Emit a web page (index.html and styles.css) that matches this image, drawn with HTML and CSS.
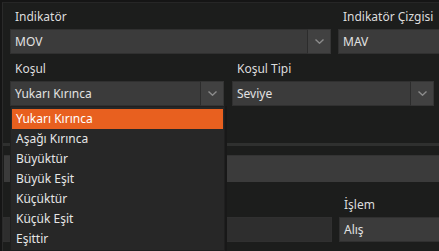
FILE: index.html
```html
<!DOCTYPE html>
<html lang="tr">
<head>
  <meta charset="UTF-8" />
  <meta name="viewport" content="width=device-width, initial-scale=1.0"/>
  <title>Koşul</title>
  <link rel="stylesheet" href="styles.css">
</head>
<body>
  <div class="frame">
    <div class="panel">
      <div class="row">
        <div class="field f-ind">
          <div class="label">Indikatör</div>
          <div class="select">
            <span class="value">MOV</span>
            <span class="btn"><svg width="9" height="5" viewBox="0 0 9 5"><path d="M0.5 0.5 L4.5 4.2 L8.5 0.5" fill="none" stroke="#8c8c8c" stroke-width="1.4"/></svg></span>
          </div>
        </div>
        <div class="field f-line">
          <div class="label">Indikatör Çizgisi</div>
          <div class="select"><span class="value">MAV</span></div>
        </div>
      </div>

      <div class="row">
        <div class="field f-cond">
          <div class="label">Koşul</div>
          <div class="select">
            <span class="value">Yukarı Kırınca</span>
            <span class="btn"><svg width="9" height="5" viewBox="0 0 9 5"><path d="M0.5 0.5 L4.5 4.2 L8.5 0.5" fill="none" stroke="#8c8c8c" stroke-width="1.4"/></svg></span>
          </div>
          <ul class="menu">
            <li class="active">Yukarı Kırınca</li>
            <li>Aşağı Kırınca</li>
            <li>Büyüktür</li>
            <li>Büyük Eşit</li>
            <li>Küçüktür</li>
            <li>Küçük Eşit</li>
            <li>Eşittir</li>
          </ul>
        </div>
        <div class="field f-type">
          <div class="label">Koşul Tipi</div>
          <div class="select">
            <span class="value">Seviye</span>
            <span class="btn"><svg width="9" height="5" viewBox="0 0 9 5"><path d="M0.5 0.5 L4.5 4.2 L8.5 0.5" fill="none" stroke="#8c8c8c" stroke-width="1.4"/></svg></span>
          </div>
        </div>
      </div>
    </div>

    <div class="divider"></div>

    <div class="lower">
      <div class="bar"></div>
      <div class="row row-op">
        <div class="field f-left">
          <div class="label">&nbsp;</div>
          <div class="select dim"></div>
        </div>
        <div class="field f-op">
          <div class="label">İşlem</div>
          <div class="select"><span class="value">Alış</span></div>
        </div>
      </div>
    </div>
  </div>
</body>
</html>
```

FILE: styles.css
```css
:root {
  --bg: #1c1d1c;
  --box: #3b3b3b;
  --box-border: #303030;
  --btn: #414141;
  --text: #e2e2e2;
  --menu: #272727;
  --orange: #e8601f;
}

body {
  margin: 0;
  background: #151515;
  font-family: "Noto Sans", "Open Sans", sans-serif;
  font-size: 12px;
  color: var(--text);
  overflow: hidden;
}

.frame {
  margin: 2px 0 0 2px;
  height: 249px;
  background: var(--bg);
  border-left: 1px solid #2a2a2a;
  border-top: 1px solid #262626;
  box-sizing: border-box;
  overflow: hidden;
}

.panel {
  padding: 5px 0 0 7px;
}

.row {
  display: flex;
  gap: 7px;
}

.field {
  position: relative;
  flex-shrink: 0;
}

.label {
  height: 21px;
  line-height: 17px;
  padding-left: 5px;
  color: #dcdcdc;
  white-space: nowrap;
}

.select {
  display: flex;
  height: 25px;
  background: var(--box);
  border: 1px solid var(--box-border);
  box-sizing: border-box;
}

.select .value {
  flex: 1;
  line-height: 23px;
  padding-left: 4px;
  white-space: nowrap;
}

.select .btn {
  width: 22px;
  margin: -1px -1px -1px 0;
  background: var(--btn);
  border: 1px solid #353535;
  border-left: 1px solid #2c2c2c;
  display: flex;
  align-items: center;
  justify-content: center;
}

.f-ind { width: 321px; margin-bottom: 6px; }
.f-line { width: 110px; }
.f-cond { width: 214px; }
.f-type { width: 202px; margin-left: 1px; }

.menu {
  position: absolute;
  top: 46px;
  left: 0;
  width: 215px;
  margin: 0;
  padding: 2px 1px 1px;
  list-style: none;
  background: var(--menu);
  border: 1px solid #1f1f1f;
  box-shadow: 2px 0 0 #181818;
  box-sizing: border-box;
  z-index: 2;
}

.menu li {
  height: 20px;
  line-height: 20px;
  padding-left: 4px;
  color: #e6e6e6;
  white-space: nowrap;
}

.menu li.active {
  background: var(--orange);
  color: #fff;
}

.divider {
  margin-top: 37px;
  height: 3px;
  background: #2f302f;
}

.lower {
  padding-top: 9px;
}

.bar {
  height: 27px;
  background: var(--box);
  border-top: 1px solid #333;
  box-sizing: border-box;
  margin-left: 1px;
}

.row-op {
  padding-top: 14px;
}

.f-left { width: 329px; }
.f-op { width: 110px; }

.select.dim {
  background: #2e2e2e;
}
```
